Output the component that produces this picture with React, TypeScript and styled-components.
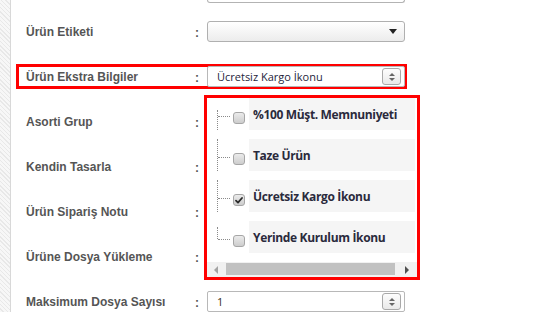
import styled, { createGlobalStyle } from "styled-components";

const GlobalStyle = createGlobalStyle`
  html, body {
    margin: 0;
    padding: 0;
    background: #fff;
  }
  body {
    width: 558px;
    height: 312px;
    overflow: hidden;
    font-family: "Liberation Sans", Arial, sans-serif;
  }
`;

const Page = styled.div`
  display: flex;
  height: 312px;
  overflow: hidden;
`;

const Strip = styled.div`
  width: 10px;
  flex-shrink: 0;
  border-right: 1px solid #d8d8d8;
  background: repeating-linear-gradient(
    45deg,
    #f7f7f7 0px,
    #f7f7f7 2px,
    #e8e8e8 2px,
    #e8e8e8 3px
  );
`;

const Form = styled.div`
  flex: 1;
  padding-left: 5px;
`;

const PrevField = styled.div`
  margin-left: 191px;
  margin-bottom: 6px;
  width: 198px;
  height: 3px;
  box-sizing: border-box;
  border: 1px solid #b3b3b3;
  border-top: none;
  border-radius: 0 0 3px 3px;
`;

const Row = styled.div`
  height: 45px;
  display: flex;
  align-items: center;
`;

const Line = styled.div<{ $highlight?: boolean }>`
  width: 391px;
  height: 25px;
  box-sizing: border-box;
  padding-left: 10px;
  display: flex;
  align-items: center;
  outline: ${(p) => (p.$highlight ? "3px solid #ff0000" : "none")};
  outline-offset: -3px;
`;

const Label = styled.div`
  width: 169px;
  flex-shrink: 0;
  font-size: 12px;
  font-weight: 700;
  color: #555;
  white-space: nowrap;
`;

const Colon = styled.div`
  width: 12px;
  flex-shrink: 0;
  font-size: 12px;
  font-weight: 700;
  color: #555;
  margin-top: 2px;
`;

const Control = styled.div`
  position: relative;
  width: 198px;
  height: 21px;
  flex-shrink: 0;
`;

const SelectBox = styled.div`
  height: 21px;
  box-sizing: border-box;
  border: 1px solid #b0b0b0;
  border-radius: 3px;
  background: linear-gradient(#ffffff, #ececec);
  display: flex;
  align-items: center;
  justify-content: flex-end;
  padding-right: 7px;
`;

const Caret = styled.span`
  width: 0;
  height: 0;
  border-left: 4px solid transparent;
  border-right: 4px solid transparent;
  border-top: 5px solid #222;
`;

const SpinBox = styled.div`
  height: 21px;
  box-sizing: border-box;
  border: 1px solid #b8b8b8;
  border-radius: 2px;
  background: #fff;
  display: flex;
  align-items: center;
  justify-content: space-between;
  padding: 0 3px 0 9px;
`;

const SpinText = styled.span<{ $tone?: string }>`
  font-family: "Open Sans", "Noto Sans", sans-serif;
  font-size: 11px;
  color: ${(p) => p.$tone || "#1e1e3c"};
  white-space: nowrap;
`;

const SpinButton = styled.div`
  width: 19px;
  height: 17px;
  box-sizing: border-box;
  border: 1px solid #a9a9a9;
  border-radius: 3px;
  background: linear-gradient(#fdfdfd, #e9e9e9);
  display: flex;
  flex-direction: column;
  align-items: center;
  justify-content: center;
  gap: 2px;
`;

const Tri = styled.span<{ $dir: "up" | "down" }>`
  width: 0;
  height: 0;
  border-left: 3px solid transparent;
  border-right: 3px solid transparent;
  ${(p) =>
    p.$dir === "up"
      ? "border-bottom: 3px solid #666;"
      : "border-top: 3px solid #666;"}
`;

const Dropdown = styled.div`
  position: absolute;
  top: 29px;
  left: -3px;
  width: 216px;
  height: 185px;
  box-sizing: border-box;
  border: 3px solid #ff0000;
  background: #fff;
  display: flex;
  flex-direction: column;
  overflow: hidden;
  z-index: 2;
`;

const Tree = styled.div`
  flex: 1;
  padding: 0 2px 0 10px;
  display: flex;
  flex-direction: column;
  gap: 9px;
`;

const Item = styled.div`
  height: 32px;
  display: flex;
  flex-shrink: 0;
`;

const Branch = styled.div<{ $first?: boolean; $last?: boolean }>`
  position: relative;
  width: 14px;
  flex-shrink: 0;

  &::before {
    content: "";
    position: absolute;
    left: 0;
    top: ${(p) => (p.$first ? "12px" : p.$last ? "6px" : "0")};
    height: ${(p) => (p.$first ? "20px" : p.$last ? "12px" : "32px")};
    border-left: 1px dotted #8a8a8a;
  }

  &::after {
    content: "";
    position: absolute;
    left: 1px;
    top: 18px;
    width: 12px;
    border-top: 1px dotted #8a8a8a;
  }
`;

const Check = styled.div`
  width: 12px;
  height: 12px;
  margin: 14px 0 0 2px;
  box-sizing: border-box;
  border: 1px solid #a6a6a6;
  border-radius: 3px;
  background: linear-gradient(#ebebeb, #cdcdcd);
  flex-shrink: 0;
  display: flex;
  align-items: center;
  justify-content: center;
`;

const ItemText = styled.div`
  flex: 1;
  margin-left: 4px;
  padding-left: 4px;
  background: #f5f5f5;
  display: flex;
  align-items: center;
  font-family: "Open Sans", "Noto Sans", sans-serif;
  font-size: 12px;
  font-weight: 700;
  letter-spacing: -0.35px;
  color: #2a2a3c;
  white-space: nowrap;
  overflow: hidden;
`;

const ScrollBar = styled.div`
  height: 15px;
  flex-shrink: 0;
  background: #f1f1f1;
  display: flex;
  align-items: center;
`;

const ScrollBtn = styled.div<{ $w: number }>`
  width: ${(p) => p.$w}px;
  height: 100%;
  flex-shrink: 0;
  display: flex;
  align-items: center;
  justify-content: center;
`;

const Arrow = styled.span<{ $dir: "left" | "right" }>`
  width: 0;
  height: 0;
  border-top: 4px solid transparent;
  border-bottom: 4px solid transparent;
  ${(p) =>
    p.$dir === "left"
      ? "border-right: 4px solid #a3a3a3;"
      : "border-left: 4px solid #505050;"}
`;

const Thumb = styled.div`
  flex: 1;
  height: 12px;
  margin: 0 2px;
  align-self: flex-start;
  margin-top: 1px;
  background: #c1c1c1;
`;

const options = [
  { label: "%100 Müşt. Memnuniyeti", checked: false },
  { label: "Taze Ürün", checked: false },
  { label: "Ücretsiz Kargo İkonu", checked: true },
  { label: "Yerinde Kurulum İkonu", checked: false },
];

const CheckMark = () => (
  <svg width="8" height="7" viewBox="0 0 8 7">
    <path
      d="M1 3.6 L3 5.6 L7 1"
      fill="none"
      stroke="#2b2b2b"
      strokeWidth="1.8"
      strokeLinecap="round"
      strokeLinejoin="round"
    />
  </svg>
);

const Spinner = () => (
  <SpinButton>
    <Tri $dir="up" />
    <Tri $dir="down" />
  </SpinButton>
);

export default function App() {
  return (
    <>
      <GlobalStyle />
      <Page>
        <Strip />
        <Form>
          <PrevField />

          <Row>
            <Line>
              <Label>Ürün Etiketi</Label>
              <Colon>:</Colon>
              <Control>
                <SelectBox>
                  <Caret />
                </SelectBox>
              </Control>
            </Line>
          </Row>

          <Row>
            <Line $highlight>
              <Label>Ürün Ekstra Bilgiler</Label>
              <Colon>:</Colon>
              <Control>
                <SpinBox>
                  <SpinText>Ücretsiz Kargo İkonu</SpinText>
                  <Spinner />
                </SpinBox>
                <Dropdown>
                  <Tree>
                    {options.map((o, i) => (
                      <Item key={o.label}>
                        <Branch $first={i === 0} $last={i === options.length - 1} />
                        <Check>{o.checked && <CheckMark />}</Check>
                        <ItemText>{o.label}</ItemText>
                      </Item>
                    ))}
                  </Tree>
                  <ScrollBar>
                    <ScrollBtn $w={17}>
                      <Arrow $dir="left" />
                    </ScrollBtn>
                    <Thumb />
                    <ScrollBtn $w={20}>
                      <Arrow $dir="right" />
                    </ScrollBtn>
                  </ScrollBar>
                </Dropdown>
              </Control>
            </Line>
          </Row>

          {["Asorti Grup", "Kendin Tasarla", "Ürün Sipariş Notu", "Ürüne Dosya Yükleme"].map(
            (l) => (
              <Row key={l}>
                <Line>
                  <Label>{l}</Label>
                  <Colon>:</Colon>
                </Line>
              </Row>
            )
          )}

          <Row>
            <Line>
              <Label>Maksimum Dosya Sayısı</Label>
              <Colon>:</Colon>
              <Control>
                <SpinBox>
                  <SpinText $tone="#3a3020">1</SpinText>
                  <Spinner />
                </SpinBox>
              </Control>
            </Line>
          </Row>
        </Form>
      </Page>
    </>
  );
}
